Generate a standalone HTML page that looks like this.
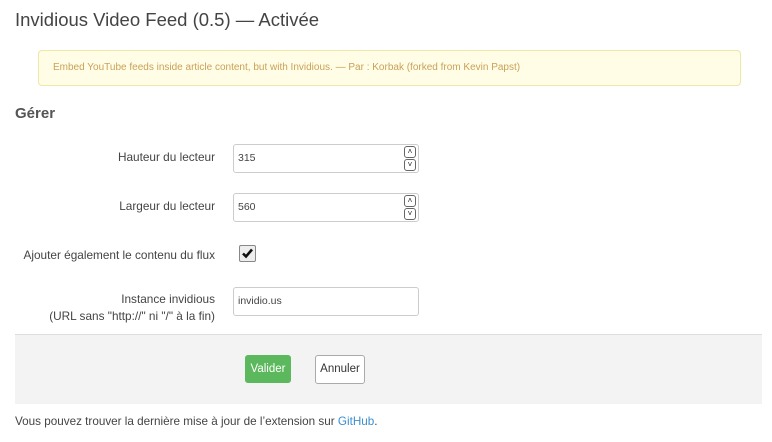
<!DOCTYPE html>
<html><head><meta charset="utf-8"><style>
body{margin:0;width:772px;height:442px;background:#fff;font-family:"Liberation Sans",sans-serif;color:#444;position:relative;overflow:hidden}
.a{position:absolute;white-space:nowrap}
.lbl{position:absolute;right:557px;font-size:11.8px;text-align:right;line-height:17px}
.inp{position:absolute;left:233px;width:184px;height:27px;border:1px solid #ccc;border-radius:3px;background:#fff;font-size:10.5px;line-height:27px;box-sizing:content-box}
.inp span{position:absolute;left:4px;top:0}
.sp{position:absolute;right:2px;top:1px;width:12px;height:25px}
.sp div{height:10px;border:1px solid #666;border-radius:3px;margin-bottom:1px;font-size:8px;line-height:10px;text-align:center;color:#222}
</style></head><body>
<div class="a" style="left:15px;top:9px;font-size:18.5px;color:#444">Invidious Video Feed (0.5) — Activée</div>
<div class="a" style="left:38px;top:50px;width:701px;height:34px;background:#fffde6;border:1px solid #eee7a6;border-radius:4px"></div>
<div class="a" style="left:53px;top:62px;font-size:10px;color:#c9a15a">Embed YouTube feeds inside article content, but with Invidious. — Par : Korbak (forked from Kevin Papst)</div>
<div class="a" style="left:15px;top:105px;font-size:15px;font-weight:bold;color:#555">Gérer</div>

<div class="lbl" style="top:149px">Hauteur du lecteur</div>
<div class="inp" style="top:144px"><span>315</span><div class="sp"><div>˄</div><div>˅</div></div></div>
<div class="lbl" style="top:198px">Largeur du lecteur</div>
<div class="inp" style="top:193px"><span>560</span><div class="sp"><div>˄</div><div>˅</div></div></div>
<div class="lbl" style="top:247px">Ajouter également le contenu du flux</div>
<div class="a" style="left:239px;top:245px;width:15px;height:15px;border:1px solid #888;border-radius:2px;background:#eee">
<svg width="15" height="15" viewBox="0 0 15 15"><path d="M3 7.5 L6 10.5 L12 3.5" stroke="#111" stroke-width="2.6" fill="none"/></svg></div>
<div class="lbl" style="top:291px">Instance invidious<br>(URL sans "http://" ni "/" à la fin)</div>
<div class="inp" style="top:287px"><span>invidio.us</span></div>

<div class="a" style="left:15px;top:334px;width:747px;height:69px;background:#f3f3f3;border-top:1px solid #ddd"></div>
<div class="a" style="left:245px;top:355px;width:46px;height:28px;background:#5cb85c;border-radius:3px;color:#fff;font-size:11.5px;line-height:28px;text-align:center">Valider</div>
<div class="a" style="left:315px;top:355px;width:48px;height:27px;background:#fff;border:1px solid #aaa;border-radius:3px;color:#333;font-size:11.5px;line-height:27px;text-align:center">Annuler</div>
<div class="a" style="left:15px;top:415px;font-size:11.7px">Vous pouvez trouver la dernière mise à jour de l’extension sur <span style="color:#3a8fd0">GitHub</span>.</div>
</body></html>
